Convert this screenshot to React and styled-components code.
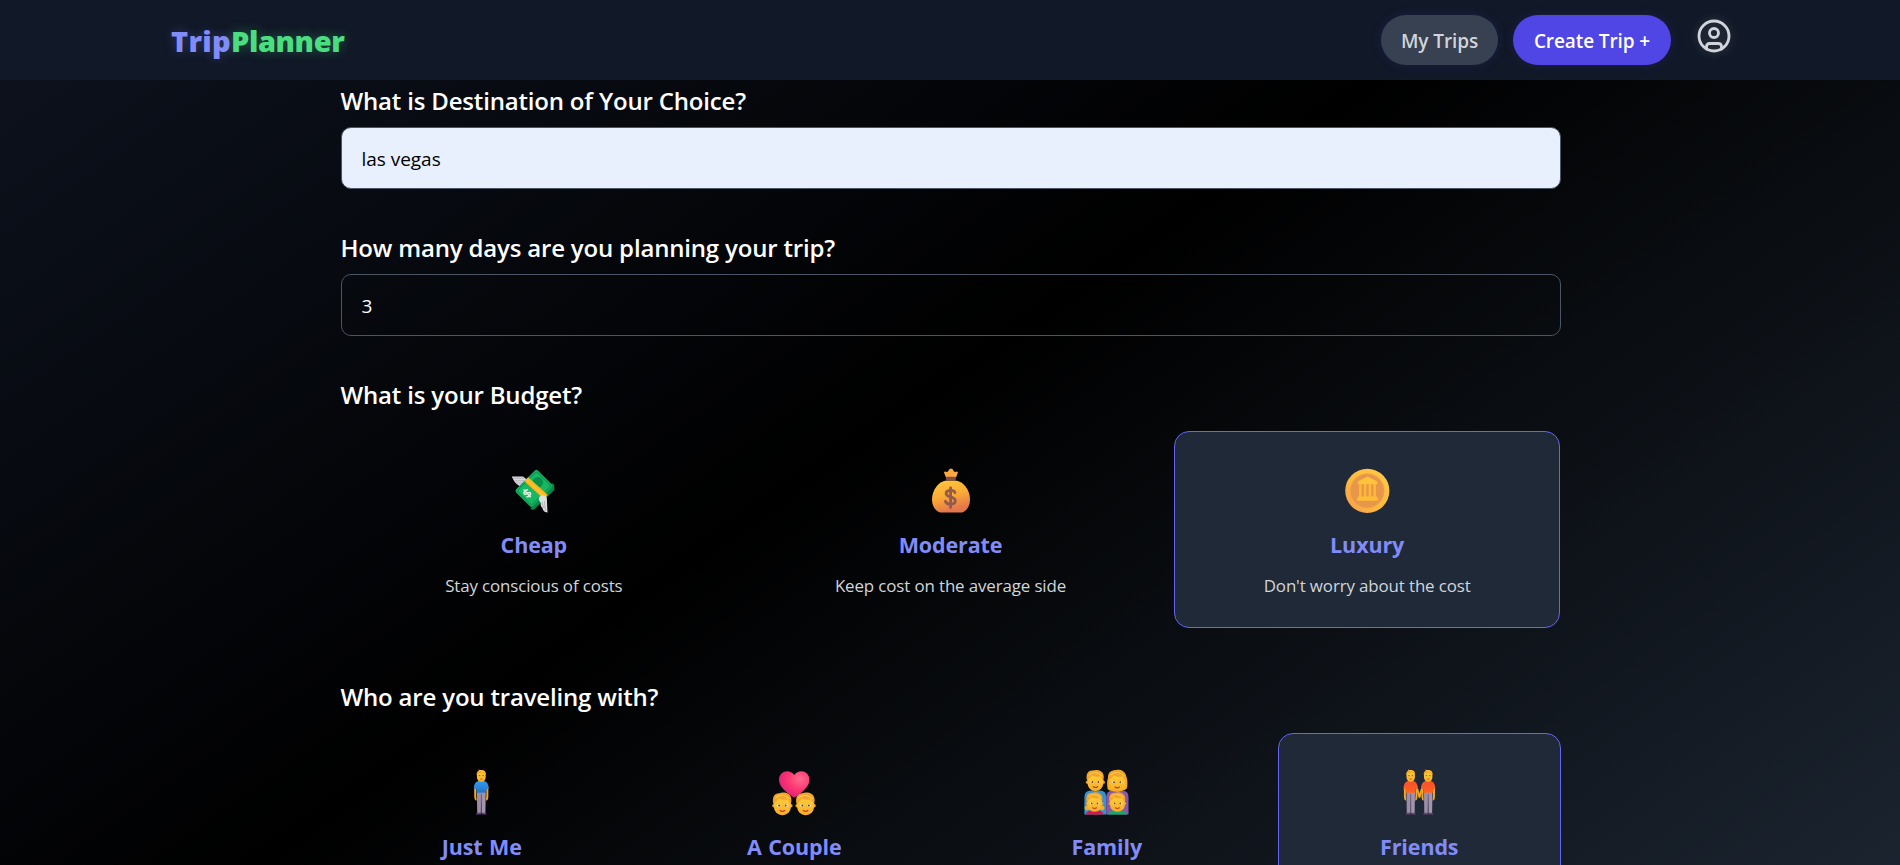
import React from 'react';
import styled, { createGlobalStyle } from 'styled-components';
import { CircleUser } from 'lucide-react';

const GlobalStyle = createGlobalStyle`
  *, *::before, *::after { box-sizing: border-box; }
  body { margin: 0; background: #000; overflow: hidden; }
`;

const Page = styled.div`
  height: 865px;
  overflow: hidden;
  color: #fff;
  font-family: 'Open Sans', 'Noto Sans', sans-serif;
  background: linear-gradient(to bottom right, #111827, #000, #1f2937) 0 -285px / 100% 1330px no-repeat;
`;

const NavBar = styled.header`
  display: flex;
  align-items: center;
  justify-content: space-between;
  height: 80px;
  padding: 0 168.5px 0 171px;
  background: #111827;
`;

const Logo = styled.a`
  padding-top: 2px;
  font-size: 29px;
  font-weight: 800;
  line-height: 40px;
`;

const LogoPart = styled.span`
  color: ${(p) => p.$color};
  letter-spacing: ${(p) => p.$tracking || 0};
  text-shadow: 0 0 12px ${(p) => p.$glow};
`;

const NavActions = styled.nav`
  display: flex;
  align-items: center;
  gap: 15px;
  height: 80px;
`;

const PillButton = styled.button`
  width: ${(p) => p.$width};
  height: 50px;
  padding: 1px 0 0;
  border: 0;
  border-radius: 25px;
  background: ${(p) => (p.$primary ? '#4f46e5' : '#374151')};
  color: ${(p) => (p.$primary ? '#fff' : '#d1d5db')};
  font: 600 19px 'Open Sans', 'Noto Sans', sans-serif;
  letter-spacing: -0.1px;
  box-shadow: 0 0 12px rgba(79, 70, 229, 0.16);
`;

const AccountButton = styled.button`
  display: flex;
  align-self: flex-start;
  margin: 18.4px 0 0 9.5px;
  padding: 0;
  border: 0;
  background: none;
  color: #d1d5db;
  filter: drop-shadow(0 0 5px rgba(209, 213, 219, 0.22));
`;

const Form = styled.main`
  padding: 6px 339.5px 0 340.5px;
`;

const Field = styled.section`
  margin-bottom: ${(p) => (p.$choices ? '54px' : '44px')};
`;

const Label = styled.h2`
  margin: 0 0 ${(p) => (p.$choices ? '21px' : '11px')};
  font-size: 24px;
  font-weight: 600;
  line-height: 30px;
  letter-spacing: -0.18px;
`;

const TextInput = styled.input`
  display: block;
  width: 100%;
  height: 62px;
  padding: 2px 20px 0;
  border: 1px solid #4b5563;
  border-radius: 10px;
  outline: 0;
  background: ${(p) => (p.$filled ? '#e8f0fe' : 'transparent')};
  color: ${(p) => (p.$filled ? '#000' : '#fff')};
  font: 400 19px 'Open Sans', 'Noto Sans', sans-serif;
  letter-spacing: -0.03px;
`;

const CardGrid = styled.div`
  display: grid;
  grid-template-columns: repeat(${(p) => p.$columns}, 1fr);
  gap: 30px;
`;

const Card = styled.article`
  display: flex;
  flex-direction: column;
  align-items: center;
  height: 197px;
  padding-top: 36px;
  border: 1px solid ${(p) => (p.$selected ? '#6366f1' : 'transparent')};
  border-radius: 15px;
  background: ${(p) => (p.$selected ? '#1f2937' : 'transparent')};
`;

const CardTitle = styled.h3`
  margin: 17px 0 12px;
  color: #818cf8;
  font-size: 21.5px;
  font-weight: 700;
  line-height: 30px;
  letter-spacing: -0.12px;
  word-spacing: 1px;
`;

const CardText = styled.p`
  margin: 0;
  color: #d1d5db;
  font-size: 16.9px;
  line-height: 28px;
  letter-spacing: -0.12px;
`;

const Art = styled.svg`
  display: block;
  width: 45px;
  height: 45px;
  flex: none;
  overflow: visible;
`;

const Defs = () => (
  <defs>
    <linearGradient id="gold" x1="0" y1="0" x2="0.3" y2="1">
      <stop offset="0" stopColor="#ffc93c" />
      <stop offset="0.55" stopColor="#fbab35" />
      <stop offset="1" stopColor="#e5774b" />
    </linearGradient>
    <linearGradient id="rim" x1="1" y1="0" x2="0" y2="1">
      <stop offset="0" stopColor="#ffcb48" />
      <stop offset="0.6" stopColor="#feb83c" />
      <stop offset="1" stopColor="#f49a55" />
    </linearGradient>
    <linearGradient id="skin" x1="0" y1="0" x2="0" y2="1">
      <stop offset="0" stopColor="#ffd13b" />
      <stop offset="1" stopColor="#f8ad27" />
    </linearGradient>
    <radialGradient id="heart" cx="0.7" cy="0.3" r="0.8">
      <stop offset="0" stopColor="#ff6a8c" />
      <stop offset="0.55" stopColor="#fb3371" />
      <stop offset="1" stopColor="#d4207a" />
    </radialGradient>
    <linearGradient id="blueShirt" x1="0" y1="0" x2="0" y2="1">
      <stop offset="0" stopColor="#2f9cf0" />
      <stop offset="1" stopColor="#2872c8" />
    </linearGradient>
    <linearGradient id="redShirt" x1="0" y1="0" x2="0" y2="1">
      <stop offset="0" stopColor="#f5512f" />
      <stop offset="1" stopColor="#ff6220" />
    </linearGradient>
    <linearGradient id="trousers" x1="0" y1="0" x2="1" y2="0">
      <stop offset="0" stopColor="#9a8aa4" />
      <stop offset="1" stopColor="#a796b3" />
    </linearGradient>
  </defs>
);

const Cash = () => (
  <Art viewBox="0 0 45 45">
    <Defs />
    <path d="M0.8 8.5H12l5 4-8.5 5.5C4.5 16 2.5 12.5 0.8 8.5Z" fill="#dcd9dd" />
    <path d="M2 10.3h11M3.5 12.8h10M5 15.2h7" stroke="#aaa6ad" strokeWidth=".8" />
    <path d="M41 15l2.2 1.8.2 5.2-20 19.3q-2 1.3-4-.6Z" fill="#07854b" />
    <rect x="-12" y="-15.4" width="24" height="31" rx="2.6" transform="translate(23 20.3) rotate(45)" fill="#12a95a" />
    <rect x="-10" y="-13.4" width="20" height="27" rx="1.5" transform="translate(23 20.3) rotate(45)" fill="#17b765" stroke="#07924c" strokeWidth=".8" />
    <circle cx="26.8" cy="14.3" r="5.3" fill="#079047" />
    <path d="M17.2 9.2 36.6 26.7 33 31.2 13.3 13.3Z" fill="#ffb51c" />
    <path d="M15.2 11.4 34.8 29.3" stroke="#ffc934" strokeWidth="1.4" />
    <g transform="translate(16.2 25.3) rotate(-43)" fill="none" stroke="#d9efd9" strokeWidth="1.6" strokeLinecap="round">
      <path d="M2.5-2.3C1.2-3.8-2.5-3.6-2.5-1.5c0 2.2 5 1 5 3.2 0 2-3.7 2.2-5 .6M0-4.6v9.2" />
    </g>
    <path d="M28 29.500c2-3.500 6.600-3.300 7.800.2l.7 14.900c-3.600-.5-4.700-2.600-5-4.600-2-1.500-2-3.500-1.800-5.400-1.500-1.200-2.200-3-1.700-5.100Z" fill="#e1dde0" />
    <path d="M31 34l1.5 6M33.4 33l1 10" stroke="#aca7ad" strokeWidth=".8" />
  </Art>
);

const MoneyBag = () => (
  <Art viewBox="0 0 45 45">
    <path d="M18 9.5 16 4.5q.5-1.5 2.7-.5L20 3.5q1-3 3-3t3 3l1.2.5q2.3-1 2.7.5L28 9.5Z" fill="#fda73f" />
    <path d="M12 44.5C7 42.5 4 38 4 31.5c0-10 7-18.5 15-19h8c8 .5 15 9 15 19 0 6.5-3 11-8 13Z" fill="url(#gold)" />
    <rect x="17.8" y="8.7" width="10" height="3.8" rx="1.6" fill="#854c43" />
    <path d="M27 24.6c-1.1-3.2-8.9-3-8.9.8 0 4.4 9.2 2.5 9.2 7.4 0 4.4-8.4 4.6-9.9.5M22.6 20v19.500" fill="none" stroke="#925a50" strokeWidth="2.8" strokeLinecap="round" />
  </Art>
);

const Coin = () => (
  <Art viewBox="0 0 45 45">
    <circle cx="22.3" cy="22.8" r="22.1" fill="url(#rim)" />
    <circle cx="22.2" cy="22.8" r="17" fill="#e7964a" stroke="#f7a342" strokeWidth=".8" />
    <path d="M22.5 8.5 32.4 13.5v2.800H12.7v-2.800Z" fill="#ffc23d" />
    <path d="M15.3 16v13M20.1 16v13M24.9 16v13M29.7 16v13" stroke="#feb93a" strokeWidth="2.4" />
    <path d="M13.3 28.5h18.6l1.3 2.2v2H12v-2Z" fill="#ffbd35" />
  </Art>
);

const Standing = ({ x, shirt, wide = 1 }) => (
  <g transform={`translate(${x} 0) scale(${wide} 1)`}>
    <path d="M-6.3 16.5-6.2 27q.2 2.6 1.3 2.6M6.3 16.5 6.2 27q-.2 2.6-1.3 2.6" fill="none" stroke="#efaa27" strokeWidth="2.1" />
    <path d="M-4.6 21.5h9.2L4.2 43.5H.5L0 25-.5 43.5h-3.7Z" fill="url(#trousers)" />
    <path d="M0 24v19" stroke="#695d71" strokeWidth=".9" />
    <path d="M-2.5 11h5c3.5.5 4.8 3 5.2 7.5l-2.6.5v3.7H-5.1V19l-2.6-.5c.4-4.5 1.7-7 5.2-7.5Z" fill={`url(#${shirt})`} />
    <path d="M-5.5 44.6v-.8l2-1.1H-.4v1.9ZM5.5 44.6v-.8l-2-1.1H.4v1.9Z" fill="#644178" />
    <rect x="-4.5" y=".3" width="9" height="11.4" rx="4.4" fill="url(#skin)" />
    <path d="M-4.7 5C-5.2 1-2-.4.5 0c3 .2 4.7 2.2 4.2 5C3.8 3.2 2 3 .5 2.2-1 3.4-3.5 3-4.7 5Z" fill="#f5a823" />
    <path d="M-2.8-.1C-1.5 1 1.5.8 3.6 1.8" fill="none" stroke="#ffcd3d" strokeWidth=".9" />
    <path d="M-2.6 5.6h1.5M1.1 5.6h1.5" stroke="#8a5a3c" strokeWidth="1" />
    <path d="M-1.2 9h2.4" stroke="#b5562d" strokeWidth=".9" />
  </g>
);

const Head = ({ x, y, scale = 1, longHair }) => (
  <g transform={`translate(${x} ${y}) scale(${scale})`}>
    {longHair && <path d="M-10 8C-12-4-7-12 0-11.5 8-12 12-4 10.3 7 8 12-8 12-10 8Z" fill="#f7ab25" />}
    <circle cx="-8.5" cy="1.5" r="1.7" fill="#efa32a" />
    <circle cx="8.5" cy="1.5" r="1.7" fill="#efa32a" />
    <rect x="-8.5" y="-9" width="17" height="20" rx="8.3" fill="url(#skin)" />
    <path d="M-9 0c-2-8 2-11.5 6-11 3-1.5 12-1 12 6.5 0 2-.3 3.3-.6 4.5C7.5-2.5 6-3 5.5-5 1-3.5-2-5-4-6-4.5-3-7.5-3-9 0Z" fill="#f3a52b" />
    <path d="M-7-6C-4-10 3-10 7-5" fill="none" stroke="#ffc64a" strokeWidth="1.2" />
    <ellipse cx="-3.7" cy="1.3" rx="1.7" ry="1.2" fill="#fff3dd" />
    <ellipse cx="3.7" cy="1.3" rx="1.7" ry="1.2" fill="#fff3dd" />
    <circle cx="-3.3" cy="1.3" r="1" fill="#68402d" />
    <circle cx="3.3" cy="1.3" r="1" fill="#68402d" />
    <path d="M-2.3 6.3q2.3 1.6 4.6 0" fill="none" stroke="#c43b35" strokeWidth="1.3" strokeLinecap="round" />
  </g>
);

const Solo = () => (
  <Art viewBox="0 0 45 45">
    <Standing x={22.3} shirt="blueShirt" wide={0.97} />
  </Art>
);

const Couple = () => (
  <Art viewBox="0 0 45 45">
    <Head x={10.4} y={34.2} />
    <Head x={33.6} y={34.2} />
    <path d="M22.2 27.8C14 22.5 7 16.5 7 9.8 7 1 17.5-1.8 22.2 5 27-1.8 37.4 1 37.4 9.8c0 6.7-7 12.7-15.2 18Z" fill="url(#heart)" />
  </Art>
);

const Family = () => (
  <Art viewBox="0 0 45 45">
    <path d="M.4 44.5V27q0-6.5 6.5-6.5h9q6.3 0 6.3 6.5v17.5Z" fill="#3293d7" />
    <path d="M22.2 44.5V27q0-6.5 6.5-6.5H38q6.5 0 6.5 6.5v17.5Z" fill="#8659a8" />
    <Head x={11.4} y={10.8} scale={0.93} />
    <Head x={33.2} y={11} scale={0.96} longHair />
    <path d="M1.8 44.5q1-4 5.5-4H14q4.5 0 5.5 4Z" fill="#de1742" />
    <path d="M23.8 44.5q1-4 5.5-4H37q4.5 0 6 4Z" fill="#18a968" />
    <circle cx="3" cy="38" r="2.4" fill="#f5aa26" />
    <circle cx="18.2" cy="38" r="2.4" fill="#f5aa26" />
    <Head x={10.6} y={32.3} scale={0.87} />
    <Head x={33.4} y={32.3} scale={0.87} />
  </Art>
);

const FriendsPair = () => (
  <Art viewBox="0 0 45 45">
    <Standing x={13.7} shirt="redShirt" wide={0.93} />
    <Standing x={31.2} shirt="redShirt" wide={0.93} />
    <path d="M20.2 19 22.5 27 24.800 19" fill="none" stroke="#efa52b" strokeWidth="2" strokeLinejoin="round" />
  </Art>
);

const budgets = [
  { title: 'Cheap', text: 'Stay conscious of costs', Icon: Cash },
  { title: 'Moderate', text: 'Keep cost on the average side', Icon: MoneyBag },
  { title: 'Luxury', text: "Don't worry about the cost", Icon: Coin, selected: true },
];

const companions = [
  { title: 'Just Me', Icon: Solo },
  { title: 'A Couple', Icon: Couple },
  { title: 'Family', Icon: Family },
  { title: 'Friends', Icon: FriendsPair, selected: true },
];

const Choices = ({ label, items }) => (
  <Field $choices>
    <Label $choices>{label}</Label>
    <CardGrid $columns={items.length}>
      {items.map(({ title, text, Icon, selected }) => (
        <Card key={title} $selected={selected}>
          <Icon />
          <CardTitle>{title}</CardTitle>
          {text && <CardText>{text}</CardText>}
        </Card>
      ))}
    </CardGrid>
  </Field>
);

export default function App() {
  return (
    <Page>
      <GlobalStyle />
      <NavBar>
        <Logo>
          <LogoPart $color="#818cf8" $glow="rgba(129, 140, 248, 0.3)" $tracking="0.3px">Trip</LogoPart>
          <LogoPart $color="#4ade80" $glow="rgba(74, 222, 128, 0.35)" $tracking="-0.4px">Planner</LogoPart>
        </Logo>
        <NavActions>
          <PillButton $width="117px">My Trips</PillButton>
          <PillButton $width="158px" $primary>Create Trip +</PillButton>
          <AccountButton aria-label="Account">
            <CircleUser size={36} strokeWidth={1.9} />
          </AccountButton>
        </NavActions>
      </NavBar>
      <Form>
        <Field>
          <Label>What is Destination of Your Choice?</Label>
          <TextInput $filled defaultValue="las vegas" />
        </Field>
        <Field>
          <Label>How many days are you planning your trip?</Label>
          <TextInput defaultValue="3" />
        </Field>
        <Choices label="What is your Budget?" items={budgets} />
        <Choices label="Who are you traveling with?" items={companions} />
      </Form>
    </Page>
  );
}
